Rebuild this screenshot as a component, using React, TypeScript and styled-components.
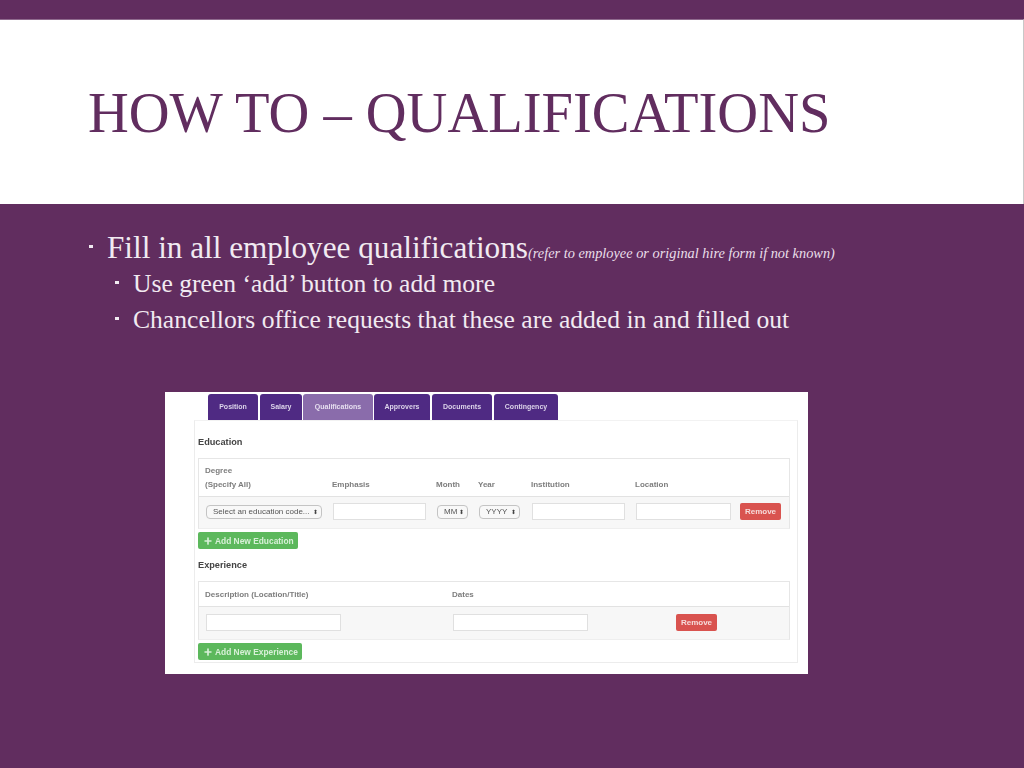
import React from "react";
import styled, { createGlobalStyle } from "styled-components";
import { Plus } from "lucide-react";

const GlobalStyle = createGlobalStyle`
  html, body {
    margin: 0;
    padding: 0;
    background: #612d5f;
  }
`;

const Slide = styled.div`
  width: 1024px;
  height: 768px;
  overflow: hidden;
  display: flex;
  flex-direction: column;
  background: #612d5f;
  font-family: "Liberation Serif", serif;
`;

const TitleBand = styled.header`
  margin-top: 19px;
  height: 185px;
  box-sizing: border-box;
  border-top: 1px solid #8f6a8e;
  border-right: 1px solid #c8c8c8;
  background: #fff;
  padding: 60px 0 0 88px;
`;

const Title = styled.h1`
  margin: 0;
  font-size: 56.5px;
  line-height: 66px;
  font-weight: 400;
  color: #612d5f;
  white-space: nowrap;
`;

const Bullets = styled.ul`
  list-style: none;
  margin: 0;
  padding: 25px 0 0 89px;
  color: #f1eaf1;
`;

const Item = styled.li<{ $sub?: boolean }>`
  display: flex;
  align-items: baseline;
  margin-left: ${(p) => (p.$sub ? "26px" : "0")};
  height: ${(p) => (p.$sub ? "36px" : "37px")};
  font-size: ${(p) => (p.$sub ? "25.6px" : "31.2px")};
  line-height: ${(p) => (p.$sub ? "36px" : "37px")};
  white-space: nowrap;
  &::before {
    content: "";
    flex: none;
    width: 4px;
    height: 3px;
    margin-right: 14px;
    background: #f1eaf1;
    transform: translateY(${(p) => (p.$sub ? "-8px" : "-10px")});
  }
`;

const Note = styled.em`
  font-size: 14.35px;
  color: #e9dfe9;
`;

const Shot = styled.section`
  width: 643px;
  height: 282px;
  box-sizing: border-box;
  margin: 54px 0 0 165px;
  padding: 2px 10px 0 29px;
  background: #fff;
  font-family: "Liberation Sans", sans-serif;
  color: #555;
`;

const Blurred = styled.div`
  filter: blur(0.7px);
`;

const Tabs = styled.nav`
  display: flex;
  padding-left: 14px;
  height: 26px;
`;

const Tab = styled.div<{ $w: number; $gap: number; $active?: boolean }>`
  width: ${(p) => p.$w}px;
  margin-right: ${(p) => p.$gap}px;
  padding-bottom: 2px;
  box-sizing: border-box;
  display: flex;
  align-items: center;
  justify-content: center;
  border-radius: 3px 3px 0 0;
  background: ${(p) => (p.$active ? "#8a6cab" : "#4f2a83")};
  color: ${(p) => (p.$active ? "#e6dff0" : "#dcd4ea")};
  font-size: 7px;
  font-weight: 700;
`;

const Panel = styled.div`
  height: 243px;
  box-sizing: border-box;
  border: 1px solid #ececec;
  border-top-color: #f2f2f2;
  padding: 0 7px 0 3px;
`;

const Heading = styled.h3<{ $h: number; $top: number }>`
  margin: 0;
  height: ${(p) => p.$h}px;
  padding-top: ${(p) => p.$top}px;
  box-sizing: border-box;
  font-size: 9.2px;
  line-height: 14px;
  font-weight: 700;
  color: #444;
`;

const Table = styled.div`
  border: 1px solid #e6e6e6;
  border-bottom-color: #eeeeee;
`;

const Row = styled.div<{ $cols: string; $head?: boolean; $h: number }>`
  display: grid;
  grid-template-columns: ${(p) => p.$cols};
  height: ${(p) => p.$h}px;
  padding-left: 6px;
  padding-bottom: ${(p) => (p.$head ? "0" : "2px")};
  align-items: ${(p) => (p.$head ? "end" : "center")};
  box-sizing: border-box;
  background: ${(p) => (p.$head ? "#fff" : "#f7f7f7")};
  border-bottom: ${(p) => (p.$head ? "1px solid #e2e2e2" : "0")};
`;

const Label = styled.div`
  font-size: 8px;
  line-height: 14px;
  font-weight: 700;
  color: #7d7d7d;
  padding-bottom: 4px;
`;

const Select = styled.div<{ $w: number }>`
  width: ${(p) => p.$w}px;
  height: 14px;
  box-sizing: border-box;
  margin-left: 1px;
  padding: 0 3px 0 6px;
  display: flex;
  align-items: center;
  justify-content: space-between;
  border: 1px solid #c4c4c4;
  border-radius: 4px;
  background: #f8f8f8;
  font-size: 8px;
  color: #555;
  white-space: nowrap;
`;

const Updown = styled.span`
  font-size: 6px;
  color: #444;
`;

const Field = styled.div<{ $w: number }>`
  width: ${(p) => p.$w}px;
  height: 17px;
  box-sizing: border-box;
  margin-left: 1px;
  border: 1px solid #e0e0e0;
  background: #fff;
`;

const Remove = styled.div`
  width: 41px;
  height: 17px;
  display: flex;
  align-items: center;
  justify-content: center;
  border-radius: 2px;
  background: #d9534f;
  color: #f6dcdb;
  font-size: 8px;
  font-weight: 700;
`;

const AddButton = styled.div<{ $w: number }>`
  width: ${(p) => p.$w}px;
  height: 17px;
  margin-top: 3px;
  box-sizing: border-box;
  padding-left: 5px;
  display: flex;
  align-items: center;
  gap: 2px;
  border-radius: 2px;
  background: #5cb85c;
  color: #d8f0d8;
  font-size: 8.4px;
  font-weight: 700;
  white-space: nowrap;
`;

const eduCols = "127px 104px 42px 53px 104px 105px 1fr";
const expCols = "247px 224px 1fr";

const tabs = [
  { name: "Position", w: 50, gap: 2 },
  { name: "Salary", w: 42, gap: 1 },
  { name: "Qualifications", w: 70, gap: 1, active: true },
  { name: "Approvers", w: 56, gap: 2 },
  { name: "Documents", w: 60, gap: 2 },
  { name: "Contingency", w: 64, gap: 0 },
];

export default function App() {
  return (
    <Slide>
      <GlobalStyle />
      <TitleBand>
        <Title>HOW TO – QUALIFICATIONS</Title>
      </TitleBand>
      <Bullets>
        <Item>
          <span>
            Fill in all employee qualifications
            <Note>(refer to employee or original hire form if not known)</Note>
          </span>
        </Item>
        <Item $sub>Use green ‘add’ button to add more</Item>
        <Item $sub>Chancellors office requests that these are added in and filled out</Item>
      </Bullets>
      <Shot>
        <Blurred>
          <Tabs>
            {tabs.map((t) => (
              <Tab key={t.name} $w={t.w} $gap={t.gap} $active={t.active}>
                {t.name}
              </Tab>
            ))}
          </Tabs>
          <Panel>
            <Heading $h={37} $top={14}>
              Education
            </Heading>
            <Table>
              <Row $cols={eduCols} $head $h={38}>
                <Label>
                  Degree
                  <br />
                  (Specify All)
                </Label>
                <Label>Emphasis</Label>
                <Label>Month</Label>
                <Label>Year</Label>
                <Label>Institution</Label>
                <Label>Location</Label>
                <span />
              </Row>
              <Row $cols={eduCols} $h={31}>
                <Select $w={116}>
                  Select an education code...<Updown>⬍</Updown>
                </Select>
                <Field $w={93} />
                <Select $w={31}>
                  MM<Updown>⬍</Updown>
                </Select>
                <Select $w={41}>
                  YYYY<Updown>⬍</Updown>
                </Select>
                <Field $w={93} />
                <Field $w={95} />
                <Remove>Remove</Remove>
              </Row>
            </Table>
            <AddButton $w={100}>
              <Plus size={10} strokeWidth={4} />
              Add New Education
            </AddButton>
            <Heading $h={32} $top={9}>
              Experience
            </Heading>
            <Table>
              <Row $cols={expCols} $head $h={25}>
                <Label>Description (Location/Title)</Label>
                <Label>Dates</Label>
                <span />
              </Row>
              <Row $cols={expCols} $h={32}>
                <Field $w={135} />
                <Field $w={135} />
                <Remove>Remove</Remove>
              </Row>
            </Table>
            <AddButton $w={104}>
              <Plus size={10} strokeWidth={4} />
              Add New Experience
            </AddButton>
          </Panel>
        </Blurred>
      </Shot>
    </Slide>
  );
}
